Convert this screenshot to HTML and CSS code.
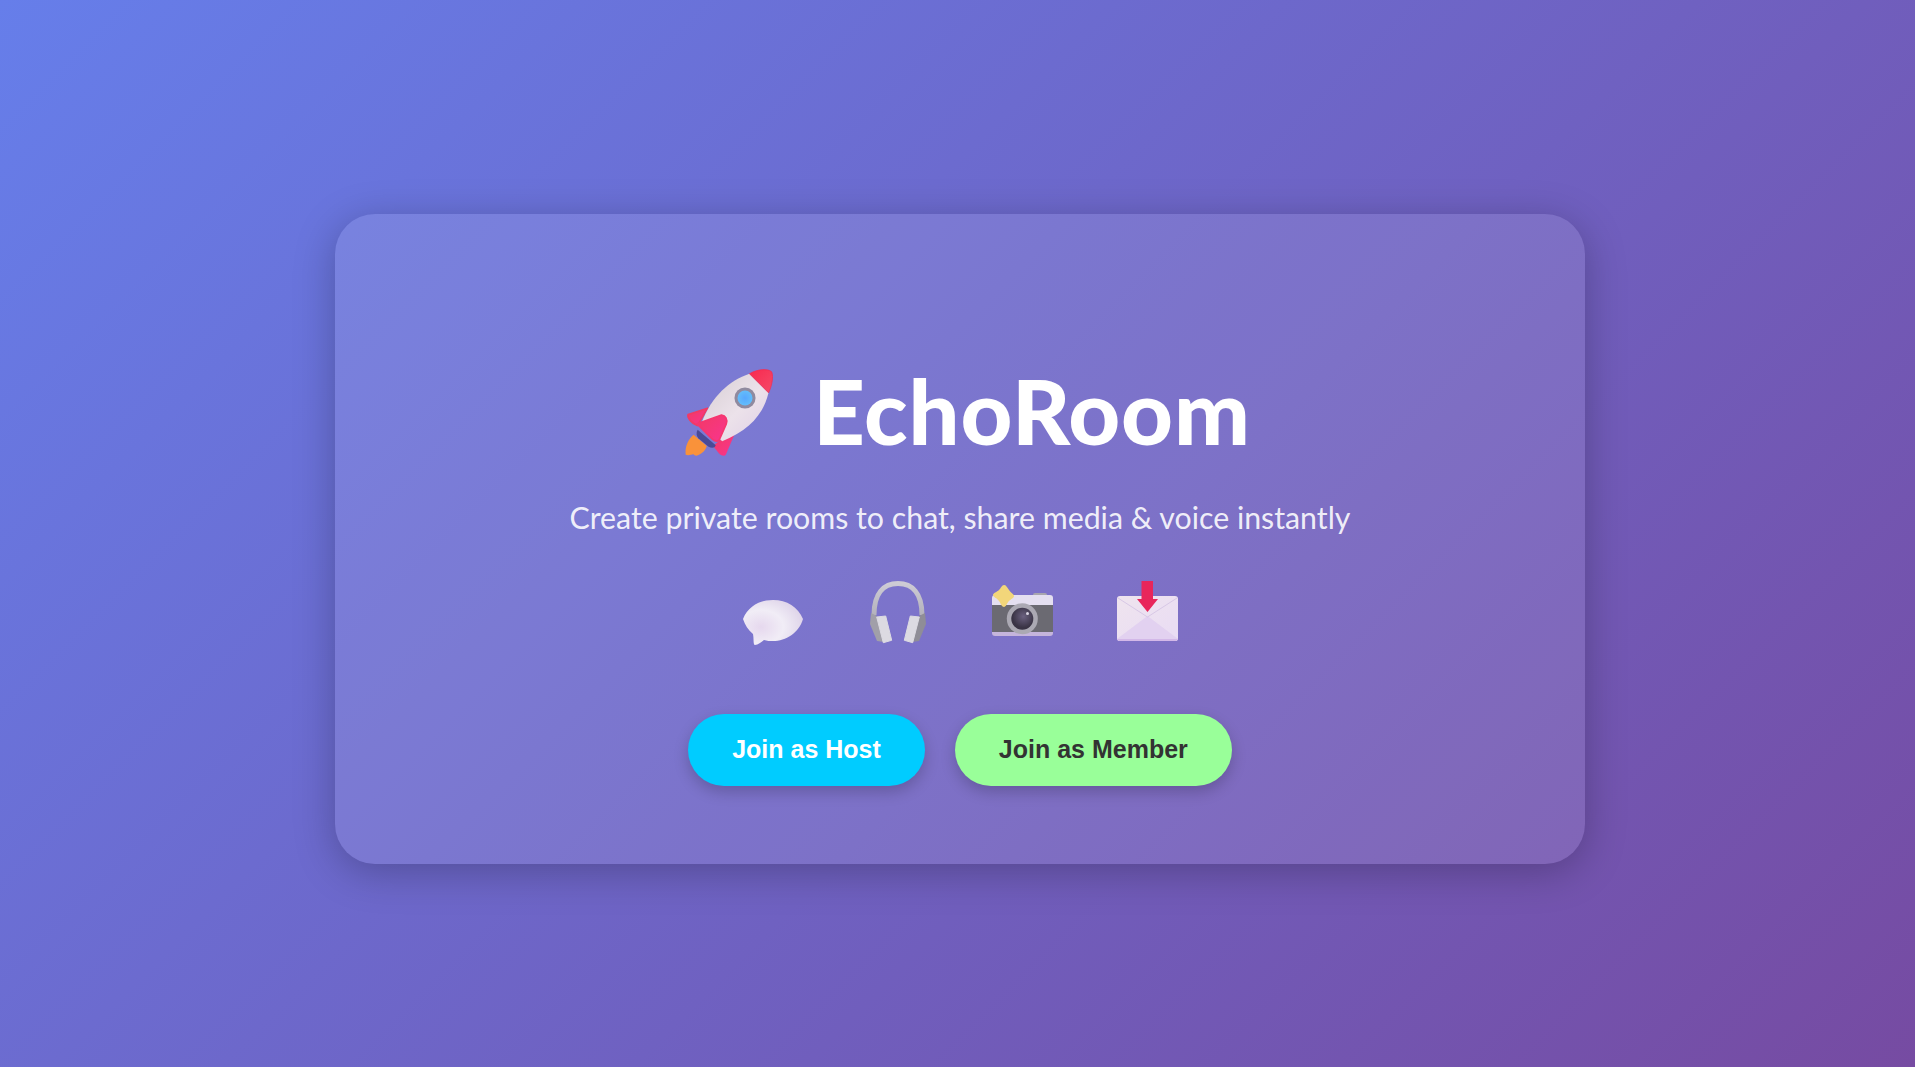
FILE: index.html
```html
<!DOCTYPE html>
<html lang="en">
<head>
<meta charset="utf-8">
<title>EchoRoom</title>
<link rel="stylesheet" href="styles.css">
</head>
<body>
<main class="card">
  <h1 class="title">
    <svg class="rocket" viewBox="45 30 270 270" aria-hidden="true">
      <defs>
        <linearGradient id="rb" x1="0" y1="0" x2="1" y2="1"><stop offset="0" stop-color="#d5cdd2"/><stop offset=".55" stop-color="#ece2ea"/><stop offset="1" stop-color="#dfcfe6"/></linearGradient>
        <linearGradient id="rr" x1="0" y1="0" x2="1" y2="1"><stop offset="0" stop-color="#f8294f"/><stop offset="1" stop-color="#f54a68"/></linearGradient>
        <linearGradient id="rf" x1="0" y1="0" x2="1" y2="1"><stop offset="0" stop-color="#f23a64"/><stop offset="1" stop-color="#f9348f"/></linearGradient>
        <radialGradient id="rw"><stop offset="0" stop-color="#58a8ff"/><stop offset="1" stop-color="#63bdfb"/></radialGradient>
      </defs>
      <path d="M117 145 60 164c-3 8 8 24 27 32Z" fill="url(#rf)" stroke="#f23a64" stroke-width="5" stroke-linejoin="round"/>
      <path d="M196 222 171 281c-4 6-13 4-20-3l-18-22 20-16Z" fill="url(#rf)"/>
      <path d="M76 223C58 238 50 262 53 282c12 3 18-3 23-2 4 5 8 5 13 3 14-5 22-15 26-27Z" fill="#f9923a"/>
      <path d="M88 208 141 254c-3 9-12 9-21 4L90 233c-6-7-7-17-2-25Z" fill="#4b4a96"/>
      <path d="M240 44C180 64 130 110 100 186l60 56c75-30 120-75 136-142Z" fill="url(#rb)"/>
      <path d="M240 44c24-14 54-16 65-6 7 14 0 44-9 62Z" fill="url(#rr)" stroke="#f8294f" stroke-width="2" stroke-linejoin="round"/>
      <circle cx="227" cy="115" r="31" fill="#908a9f"/>
      <circle cx="227" cy="115" r="22" fill="url(#rw)"/>
      <path d="M86 191 158 165c12 2 18 12 14 26l-21 48c-6 5-14 2-20-3Z" fill="url(#rf)" stroke="#f6366f" stroke-width="5" stroke-linejoin="round"/>
    </svg>
    <span>EchoRoom</span>
  </h1>
  <p class="subtitle">Create private rooms to chat, share media &amp; voice instantly</p>
  <div class="features">
    <svg class="feature" viewBox="0 0 64 64" aria-hidden="true">
      <defs><radialGradient id="bub" cx=".3" cy=".6" r=".75"><stop offset="0" stop-color="#e6d8ee"/><stop offset=".5" stop-color="#f1edf6"/><stop offset="1" stop-color="#ddd2e8"/></radialGradient></defs>
      <path d="M2 39C7 27 18 20 32 20s25 7 30 19c-4 14-17 22-30 22-3 0-6 0-9-1-3 2-6 5-9 5-2 0-1-6-2-11C7 50 4 45 2 39Z" fill="url(#bub)"/>
    </svg>
    <svg class="feature" viewBox="0 0 64 64" aria-hidden="true">
      <defs><linearGradient id="hp" x1="0" y1="0" x2="0" y2="1"><stop offset="0" stop-color="#cdcbd5"/><stop offset="1" stop-color="#b4b2bc"/></linearGradient></defs>
      <path d="M8 35C8 13 18 3.500 32 3.500s24 9.500 24 31.500" fill="none" stroke="url(#hp)" stroke-width="5"/>
      <path d="M5 33 11 36 18 62 11 61 4 44Z" fill="#a19fa9"/>
      <path d="M59 33 53 36 46 62 53 61 60 44Z" fill="#8f8d97"/>
      <path d="M10.700 37 19.700 36 25.700 60.300 17.300 62.700Z" fill="#dcdae2" stroke="#dcdae2" stroke-width="1" stroke-linejoin="round"/>
      <path d="M53.300 37 44.300 36 38.300 60.300 46.700 62.700Z" fill="#dcdae2" stroke="#dcdae2" stroke-width="1" stroke-linejoin="round"/>
    </svg>
    <svg class="feature" viewBox="0 0 64 64" aria-hidden="true">
      <defs><radialGradient id="lens" cx=".55" cy=".4"><stop offset="0" stop-color="#6b6180"/><stop offset="1" stop-color="#3a3445"/></radialGradient></defs>
      <rect x="42" y="13" width="14" height="5" rx="2" fill="#a8a6ae"/>
      <path d="M1 18a3 3 0 0 1 3-3h55a3 3 0 0 1 3 3v7H1Z" fill="#e4dff0"/>
      <rect x="1" y="25" width="61" height="27" fill="#6b6a72"/>
      <path d="M1 52h61v1a3 3 0 0 1-3 3H4a3 3 0 0 1-3-3Z" fill="#c5b5dc"/>
      <path d="M13 5c2 0 3 2 5 5s5 4 5 6-3 3-5 5-3 6-5 6-3-3-5-6-6-4-6-6 4-3 6-5 3-5 5-5Z" fill="#f2d67a"/>
      <circle cx="31.300" cy="38.700" r="15.500" fill="#aba9b3"/>
      <circle cx="31.300" cy="38.700" r="11" fill="url(#lens)"/>
      <circle cx="36.500" cy="33.500" r="1.500" fill="#d8d4e2"/>
    </svg>
    <svg class="feature" viewBox="0 0 64 64" aria-hidden="true">
      <defs><linearGradient id="env" x1="0" y1="0" x2="1" y2="1"><stop offset="0" stop-color="#efe4ee"/><stop offset="1" stop-color="#e9dcf4"/></linearGradient></defs>
      <rect x="1" y="16" width="61" height="45" rx="3" fill="url(#env)"/>
      <path d="M1 59 31.500 36 62 59V58a3 3 0 0 1-3 3H4a3 3 0 0 1-3-3Z" fill="#e2d1f0"/>
      <path d="M2 18 31.500 37 61 18" fill="none" stroke="#d8c8e6" stroke-width="1"/>
      <path d="M1 59h61a3 3 0 0 1-3 2H4a3 3 0 0 1-3-2Z" fill="#d3b8e8"/>
      <path d="M25.500 1H37V19h5L31.500 32 21 19h4.500Z" fill="#e8265b"/>
    </svg>
  </div>
  <div class="actions">
    <button class="btn btn-host" type="button">Join as Host</button>
    <button class="btn btn-member" type="button">Join as Member</button>
  </div>
</main>
</body>
</html>
```
FILE: styles.css
```css
* { box-sizing: border-box; }
html, body { margin: 0; height: 100%; }
body {
  background: linear-gradient(135deg, #667eea, #764ba2);
  display: flex;
  justify-content: center;
  align-items: center;
  padding: 11px 0 0 5px;
  overflow: hidden;
  font-family: Lato, "Open Sans", sans-serif;
  color: #fff;
}
.card {
  width: 1250px;
  height: 650px;
  padding-bottom: 78px;
  border-radius: 40px;
  background: rgba(255, 255, 255, 0.1);
  box-shadow: 0 8px 40px rgba(0, 0, 0, 0.25);
  display: flex;
  flex-direction: column;
  align-items: center;
  justify-content: flex-end;
}
.title {
  margin: 0;
  display: flex;
  align-items: center;
  gap: 38px;
  font-size: 90px;
  line-height: 120px;
  letter-spacing: 0.9px;
  font-weight: 900;
}
.rocket { width: 92px; height: 92px; margin: 10px 0 0 14px; filter: blur(0.3px); }
.subtitle {
  margin: 25px 0 0;
  font-size: 30.3px;
  line-height: 44px;
  color: rgba(255, 255, 255, 0.9);
}
.features {
  margin-top: 41px;
  display: flex;
  gap: 61px;
}
.feature { width: 64px; height: 64px; overflow: visible; filter: blur(0.4px); }
.actions {
  margin-top: 70px;
  display: flex;
  gap: 30px;
}
.btn {
  height: 72px;
  padding: 0 44px 2px;
  border: 0;
  border-radius: 36px;
  font-family: "Liberation Sans", Arial, sans-serif;
  font-size: 25px;
  font-weight: 700;
  box-shadow: 0 6px 15px rgba(0, 0, 0, 0.2);
}
.btn-host { background: #00ccff; color: #fff; }
.btn-member { background: #99ff99; color: #333; }
```
